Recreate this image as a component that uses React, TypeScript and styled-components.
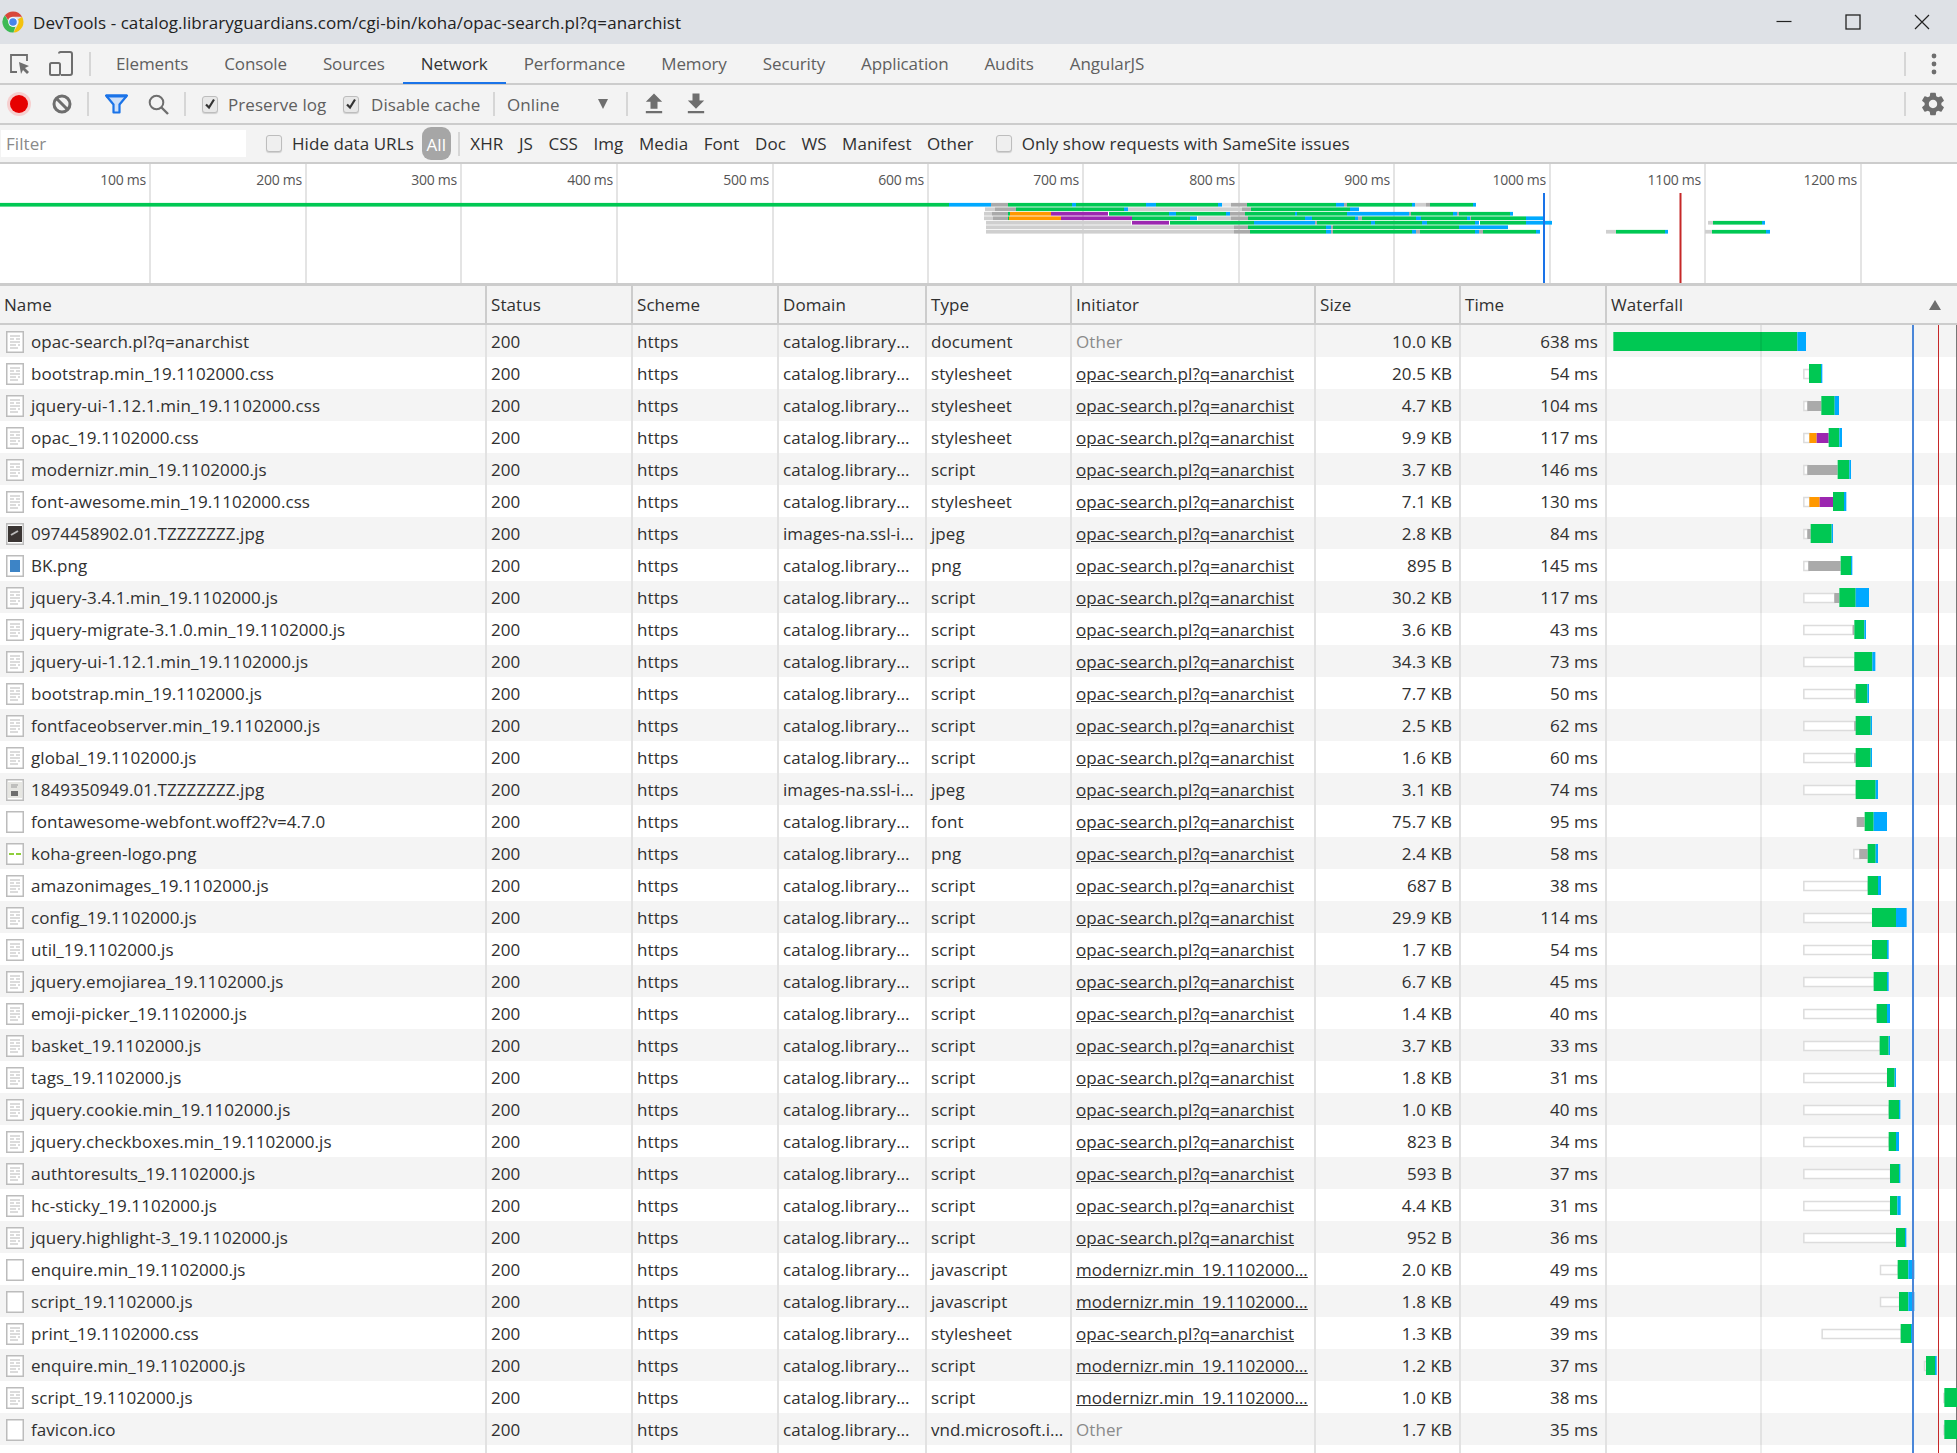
import styled, { createGlobalStyle } from 'styled-components';
import { MdFileDownload, MdFileUpload, MdSettings } from 'react-icons/md';

const GlobalStyle = createGlobalStyle`
  html, body {
    margin: 0;
    padding: 0;
    background: #fff;
  }
  * {
    box-sizing: border-box;
  }
`;

const Page = styled.div`
  width: 1957px;
  height: 1453px;
  overflow: hidden;
  display: flex;
  flex-direction: column;
  font-family: 'Open Sans', 'Noto Sans', sans-serif;
  font-size: 17px;
  letter-spacing: 0.07px;
  color: #333;
`;

const TitleBar = styled.div`
  height: 44px;
  background: #dee1e6;
  display: flex;
  align-items: center;
  padding-left: 2px;
  color: #222;
`;
const TitleText = styled.span`
  margin-left: 9px;
`;
const WindowButtons = styled.div`
  margin-left: auto;
  display: flex;
  gap: 53px;
  padding-right: 27px;
`;

const Bar = styled.div<{ $h: number }>`
  height: ${(p) => p.$h}px;
  background: #f3f3f3;
  border-bottom: 2px solid #ccc;
  display: flex;
  align-items: center;
  flex-shrink: 0;
`;
const Sep = styled.div<{ $l?: number; $r?: number }>`
  width: 2px;
  height: 24px;
  background: #d6d6d6;
  margin-left: ${(p) => p.$l || 0}px;
  margin-right: ${(p) => p.$r || 0}px;
  flex-shrink: 0;
`;
const EndSep = styled(Sep)`
  margin-left: auto;
`;
const IconSlot = styled.div<{ $w: number; $l?: number; $r?: number }>`
  width: ${(p) => p.$w}px;
  margin-left: ${(p) => p.$l || 0}px;
  margin-right: ${(p) => p.$r || 0}px;
  display: flex;
  justify-content: center;
  align-items: center;
  flex-shrink: 0;
  color: #6e6e6e;
`;

const Tab = styled.div<{ $active?: boolean }>`
  height: 39px;
  line-height: 38px;
  padding: 0 18px;
  letter-spacing: -0.12px;
  color: ${(p) => (p.$active ? '#333' : '#5f5f5f')};
  border-bottom: 2px solid ${(p) => (p.$active ? '#1a73e8' : 'transparent')};
  position: relative;
  top: 1px;
`;
const ToolLabel = styled.span<{ $l: number; $w?: number; $dark?: boolean }>`
  margin-left: ${(p) => p.$l}px;
  width: ${(p) => (p.$w ? `${p.$w}px` : 'auto')};
  color: ${(p) => (p.$dark ? '#303030' : '#5f5f5f')};
  white-space: nowrap;
`;
const Check = styled.span<{ $on?: boolean; $l: number }>`
  width: 16px;
  height: 17px;
  margin-left: ${(p) => p.$l}px;
  border-radius: 3px;
  border: 1px solid #bdbdbd;
  background: ${(p) => (p.$on ? '#e8e8e8' : '#efefef')};
  box-shadow: 0 1px 1px rgba(0, 0, 0, 0.15);
  display: flex;
  align-items: center;
  justify-content: center;
  flex-shrink: 0;
`;
const Triangle = styled.span<{ $l: number }>`
  margin-left: ${(p) => p.$l}px;
  width: 0;
  height: 0;
  border-left: 5px solid transparent;
  border-right: 5px solid transparent;
  border-top: 10px solid #6e6e6e;
`;

const FilterBox = styled.div`
  width: 245px;
  height: 27px;
  margin-left: 1px;
  padding-left: 5px;
  background: #fff;
  color: #8a8a8a;
  line-height: 27px;
`;
const FilterChips = styled.div`
  display: flex;
  align-items: center;
  margin-left: 10.5px;
  gap: 15.5px;
`;
const Chip = styled.span`
  color: #303030;
`;
const AllChip = styled.span`
  width: 29px;
  height: 33px;
  margin-left: 8px;
  border-radius: 9px;
  background: #a6a6a6;
  color: #fff;
  line-height: 35px;
  text-align: center;
  flex-shrink: 0;
`;

const Overview = styled.div`
  position: relative;
  height: 122px;
  display: flex;
  flex-shrink: 0;
  background: #fff;
  border-bottom: 3px solid #ccc;
`;
const Tick = styled.div<{ $w: number }>`
  width: ${(p) => p.$w}px;
  flex-shrink: 0;
  border-right: 2px solid #e4e4e4;
  padding: 6px 3px 0 0;
  text-align: right;
  font-size: 14px;
  letter-spacing: -0.25px;
  color: #555;
`;
const OverviewBars = styled.svg`
  position: absolute;
  left: 0;
  top: 0;
`;

const Columns = styled.div<{ $h: number; $stripe?: boolean }>`
  display: grid;
  grid-template-columns: 487px 146px 146px 148px 145px 244px 145px 146px 350px;
  height: ${(p) => p.$h}px;
  line-height: ${(p) => p.$h + 1}px;
  background: ${(p) => (p.$stripe ? '#f4f4f4' : '#fff')};
  flex-shrink: 0;
`;
const HeaderRow = styled(Columns)`
  background: #f3f3f3;
  border-bottom: 2px solid #ccc;
  line-height: 37px;
`;
const HeaderCell = styled.div`
  padding-left: 4px;
  border-right: 2px solid #ccc;
  color: #303030;
  position: relative;
  &:last-child {
    border-right: 0;
  }
`;
const SortMark = styled.span`
  position: absolute;
  right: 16px;
  top: 14px;
  width: 0;
  height: 0;
  border-left: 6px solid transparent;
  border-right: 6px solid transparent;
  border-bottom: 10px solid #6e6e6e;
`;
const Body = styled.div`
  position: relative;
  flex: 1;
  display: flex;
  flex-direction: column;
  border-right: 1px solid #777;
`;
const Cell = styled.div<{ $right?: boolean; $muted?: boolean; $link?: boolean }>`
  padding: ${(p) => (p.$right ? '0 7px 0 0' : '0 0 0 4px')};
  border-right: 2px solid #e2e2e2;
  text-align: ${(p) => (p.$right ? 'right' : 'left')};
  color: ${(p) => (p.$muted ? '#8a8a8a' : '#303030')};
  text-decoration: ${(p) => (p.$link ? 'underline' : 'none')};
  white-space: nowrap;
  overflow: hidden;
`;
const NameCell = styled(Cell)`
  display: flex;
  align-items: center;
  padding-left: 6px;
  gap: 7px;
`;
const FileGlyph = styled.svg`
  flex-shrink: 0;
  margin-top: 2px;
`;
const WaterfallCell = styled.div`
  overflow: hidden;
`;
const Marker = styled.div<{ $x: number; $w: number; $c: string }>`
  position: absolute;
  top: 0;
  bottom: 0;
  left: ${(p) => p.$x}px;
  width: ${(p) => p.$w}px;
  background: ${(p) => p.$c};
  pointer-events: none;
`;

const GREEN = '#00c853';
const BLUE = '#00a9ff';
const GREY = '#aaaaaa';
const LIGHT = '#cfcfcf';
const ORANGE = '#ff9800';
const PURPLE = '#9c27b0';

// overview timeline: row y, then [colour, from, to] in page px
const overviewRows: [number, [string, number, number][]][] = [
  [203, [[GREEN, 0, 949], [BLUE, 949, 991], [GREY, 991, 1008], [GREEN, 1008, 1072], [BLUE, 1072, 1076], [GREEN, 1076, 1146], [BLUE, 1146, 1156], [GREEN, 1156, 1218], [BLUE, 1218, 1222], ['#e2e2e2', 1222, 1231], [GREY, 1231, 1247], [GREEN, 1247, 1336], [BLUE, 1336, 1344], [GREY, 1344, 1347], [GREEN, 1347, 1412], [BLUE, 1412, 1415], [LIGHT, 1415, 1426], [GREY, 1426, 1430], [GREEN, 1430, 1473], [BLUE, 1473, 1476]]],
  [207.5, [[LIGHT, 985, 995], [GREY, 995, 1016], [GREEN, 1016, 1124], [BLUE, 1124, 1128], [LIGHT, 1128, 1242], [GREY, 1242, 1251], [GREEN, 1251, 1350], [BLUE, 1350, 1359]]],
  [212, [[LIGHT, 984, 992], [GREY, 992, 1008], [GREEN, 1008, 1010], [ORANGE, 1010, 1051], [PURPLE, 1051, 1108], [GREEN, 1109, 1169], [BLUE, 1169, 1176], [GREEN, 1176, 1226], [BLUE, 1226, 1230], [GREY, 1230, 1245], [GREEN, 1245, 1295], [BLUE, 1295, 1297], [GREEN, 1297, 1347], [BLUE, 1347, 1409], [GREY, 1409, 1411], [GREEN, 1411, 1453], [BLUE, 1453, 1457], [GREY, 1457, 1459], [GREEN, 1459, 1510], [BLUE, 1510, 1513]]],
  [216.5, [[LIGHT, 984, 993], [GREY, 993, 1008], [GREEN, 1008, 1009], [ORANGE, 1009, 1061], [PURPLE, 1061, 1132], [GREEN, 1132, 1190], [BLUE, 1190, 1197], [LIGHT, 1198, 1231], [GREY, 1231, 1248], [GREEN, 1248, 1305], [BLUE, 1305, 1312], [GREEN, 1312, 1355], [BLUE, 1355, 1358], [GREY, 1358, 1362], [GREEN, 1362, 1416], [BLUE, 1416, 1421], [GREEN, 1421, 1467], [BLUE, 1467, 1470], [GREY, 1470, 1471], [GREEN, 1471, 1526], [BLUE, 1526, 1545]]],
  [221, [[LIGHT, 986, 1131], [PURPLE, 1132, 1169], [GREEN, 1170, 1254], [BLUE, 1254, 1315], [GREY, 1315, 1317], [GREEN, 1317, 1371], [BLUE, 1371, 1375], [GREEN, 1375, 1422], [BLUE, 1422, 1427], [GREEN, 1427, 1475], [BLUE, 1475, 1479], [GREEN, 1480, 1526], [BLUE, 1526, 1552], [LIGHT, 1708, 1713], [GREEN, 1713, 1762], [BLUE, 1762, 1765]]],
  [225.5, [[LIGHT, 986, 1234], [GREY, 1234, 1248], [GREEN, 1248, 1326], [BLUE, 1326, 1331], [GREY, 1331, 1333], [GREEN, 1333, 1459], [BLUE, 1459, 1508]]],
  [230, [[LIGHT, 986, 1234], [GREY, 1234, 1250], [GREEN, 1250, 1326], [BLUE, 1326, 1331], [GREY, 1331, 1333], [GREEN, 1333, 1412], [BLUE, 1412, 1416], [GREY, 1416, 1420], [GREEN, 1420, 1475], [BLUE, 1475, 1479], [GREY, 1479, 1483], [GREEN, 1483, 1536], [BLUE, 1536, 1540], [LIGHT, 1606, 1616], [GREEN, 1616, 1665], [BLUE, 1665, 1668], [LIGHT, 1705, 1712], [GREEN, 1712, 1766], [BLUE, 1766, 1770]]],
];

const tickWidths = [151, 156, 155, 156, 156, 155, 155, 156, 155, 156, 155, 156];
const tickLabels = ['100 ms', '200 ms', '300 ms', '400 ms', '500 ms', '600 ms', '700 ms', '800 ms', '900 ms', '1000 ms', '1100 ms', '1200 ms'];

type IconKind = 'doc' | 'blank' | 'dark' | 'blue' | 'book' | 'logo';
// waterfall: start, then stops of [kind, end], in thirds of a px from x=1600
type Stop = ['w' | 'a' | 'o' | 'p' | 'g' | 'b', number];
interface Req {
  name: string;
  icon: IconKind;
  domain?: string;
  type: string;
  init?: string;
  size: string;
  time: string;
  start: number;
  stops: Stop[];
}

const OPAC = 'opac-search.pl?q=anarchist';
const MOD = 'modernizr.min_19.1102000…';

const requests: Req[] = [
  { name: OPAC, icon: 'doc', type: 'document', size: '10.0 KB', time: '638 ms', start: 40, stops: [['g', 592], ['b', 618]] },
  { name: 'bootstrap.min_19.1102000.css', icon: 'doc', type: 'stylesheet', init: OPAC, size: '20.5 KB', time: '54 ms', start: 610, stops: [['w', 627], ['g', 663], ['b', 667]] },
  { name: 'jquery-ui-1.12.1.min_19.1102000.css', icon: 'doc', type: 'stylesheet', init: OPAC, size: '4.7 KB', time: '104 ms', start: 610, stops: [['w', 622], ['a', 664], ['g', 704], ['b', 717]] },
  { name: 'opac_19.1102000.css', icon: 'doc', type: 'stylesheet', init: OPAC, size: '9.9 KB', time: '117 ms', start: 610, stops: [['w', 628], ['o', 650], ['p', 686], ['g', 718], ['b', 726]] },
  { name: 'modernizr.min_19.1102000.js', icon: 'doc', type: 'script', init: OPAC, size: '3.7 KB', time: '146 ms', start: 610, stops: [['w', 622], ['a', 713], ['g', 748], ['b', 753]] },
  { name: 'font-awesome.min_19.1102000.css', icon: 'doc', type: 'stylesheet', init: OPAC, size: '7.1 KB', time: '130 ms', start: 610, stops: [['w', 628], ['o', 659], ['p', 699], ['g', 732], ['b', 739]] },
  { name: '0974458902.01.TZZZZZZZ.jpg', icon: 'dark', domain: 'images-na.ssl-i…', type: 'jpeg', init: OPAC, size: '2.8 KB', time: '84 ms', start: 610, stops: [['w', 622], ['a', 632], ['g', 695], ['b', 699]] },
  { name: 'BK.png', icon: 'blue', type: 'png', init: OPAC, size: '895 B', time: '145 ms', start: 610, stops: [['w', 625], ['a', 722], ['g', 753], ['b', 757]] },
  { name: 'jquery-3.4.1.min_19.1102000.js', icon: 'doc', type: 'script', init: OPAC, size: '30.2 KB', time: '117 ms', start: 610, stops: [['w', 703], ['a', 718], ['g', 767], ['b', 807]] },
  { name: 'jquery-migrate-3.1.0.min_19.1102000.js', icon: 'doc', type: 'script', init: OPAC, size: '3.6 KB', time: '43 ms', start: 610, stops: [['w', 758], ['a', 763], ['g', 793], ['b', 798]] },
  { name: 'jquery-ui-1.12.1.min_19.1102000.js', icon: 'doc', type: 'script', init: OPAC, size: '34.3 KB', time: '73 ms', start: 610, stops: [['w', 763], ['g', 817], ['b', 826]] },
  { name: 'bootstrap.min_19.1102000.js', icon: 'doc', type: 'script', init: OPAC, size: '7.7 KB', time: '50 ms', start: 610, stops: [['w', 763], ['a', 767], ['g', 802], ['b', 807]] },
  { name: 'fontfaceobserver.min_19.1102000.js', icon: 'doc', type: 'script', init: OPAC, size: '2.5 KB', time: '62 ms', start: 610, stops: [['w', 763], ['a', 767], ['g', 812], ['b', 816]] },
  { name: 'global_19.1102000.js', icon: 'doc', type: 'script', init: OPAC, size: '1.6 KB', time: '60 ms', start: 610, stops: [['w', 763], ['a', 767], ['g', 812], ['b', 816]] },
  { name: '1849350949.01.TZZZZZZZ.jpg', icon: 'book', domain: 'images-na.ssl-i…', type: 'jpeg', init: OPAC, size: '3.1 KB', time: '74 ms', start: 610, stops: [['w', 767], ['g', 827], ['b', 834]] },
  { name: 'fontawesome-webfont.woff2?v=4.7.0', icon: 'blank', type: 'font', init: OPAC, size: '75.7 KB', time: '95 ms', start: 770, stops: [['a', 794], ['g', 821], ['b', 861]] },
  { name: 'koha-green-logo.png', icon: 'logo', type: 'png', init: OPAC, size: '2.4 KB', time: '58 ms', start: 760, stops: [['w', 778], ['a', 803], ['g', 827], ['b', 834]] },
  { name: 'amazonimages_19.1102000.js', icon: 'doc', type: 'script', init: OPAC, size: '687 B', time: '38 ms', start: 610, stops: [['w', 803], ['g', 834], ['b', 843]] },
  { name: 'config_19.1102000.js', icon: 'doc', type: 'script', init: OPAC, size: '29.9 KB', time: '114 ms', start: 610, stops: [['w', 816], ['g', 888], ['b', 920]] },
  { name: 'util_19.1102000.js', icon: 'doc', type: 'script', init: OPAC, size: '1.7 KB', time: '54 ms', start: 610, stops: [['w', 816], ['g', 861], ['b', 866]] },
  { name: 'jquery.emojiarea_19.1102000.js', icon: 'doc', type: 'script', init: OPAC, size: '6.7 KB', time: '45 ms', start: 610, stops: [['w', 821], ['g', 861], ['b', 866]] },
  { name: 'emoji-picker_19.1102000.js', icon: 'doc', type: 'script', init: OPAC, size: '1.4 KB', time: '40 ms', start: 610, stops: [['w', 830], ['g', 861], ['b', 870]] },
  { name: 'basket_19.1102000.js', icon: 'doc', type: 'script', init: OPAC, size: '3.7 KB', time: '33 ms', start: 610, stops: [['w', 839], ['g', 866], ['b', 870]] },
  { name: 'tags_19.1102000.js', icon: 'doc', type: 'script', init: OPAC, size: '1.8 KB', time: '31 ms', start: 610, stops: [['w', 861], ['g', 884], ['b', 888]] },
  { name: 'jquery.cookie.min_19.1102000.js', icon: 'doc', type: 'script', init: OPAC, size: '1.0 KB', time: '40 ms', start: 610, stops: [['w', 866], ['g', 897], ['b', 901]] },
  { name: 'jquery.checkboxes.min_19.1102000.js', icon: 'doc', type: 'script', init: OPAC, size: '823 B', time: '34 ms', start: 610, stops: [['w', 866], ['g', 888], ['b', 897]] },
  { name: 'authtoresults_19.1102000.js', icon: 'doc', type: 'script', init: OPAC, size: '593 B', time: '37 ms', start: 610, stops: [['w', 870], ['g', 897], ['b', 901]] },
  { name: 'hc-sticky_19.1102000.js', icon: 'doc', type: 'script', init: OPAC, size: '4.4 KB', time: '31 ms', start: 610, stops: [['w', 870], ['g', 892], ['b', 902]] },
  { name: 'jquery.highlight-3_19.1102000.js', icon: 'doc', type: 'script', init: OPAC, size: '952 B', time: '36 ms', start: 610, stops: [['w', 888], ['g', 915], ['b', 919]] },
  { name: 'enquire.min_19.1102000.js', icon: 'blank', type: 'javascript', init: MOD, size: '2.0 KB', time: '49 ms', start: 840, stops: [['w', 893], ['g', 925], ['b', 943]] },
  { name: 'script_19.1102000.js', icon: 'blank', type: 'javascript', init: MOD, size: '1.8 KB', time: '49 ms', start: 840, stops: [['w', 897], ['g', 925], ['b', 943]] },
  { name: 'print_19.1102000.css', icon: 'doc', type: 'stylesheet', init: OPAC, size: '1.3 KB', time: '39 ms', start: 665, stops: [['w', 902], ['g', 933], ['b', 937]] },
  { name: 'enquire.min_19.1102000.js', icon: 'doc', type: 'script', init: MOD, size: '1.2 KB', time: '37 ms', start: 972, stops: [['w', 978], ['g', 1005], ['b', 1010]] },
  { name: 'script_19.1102000.js', icon: 'doc', type: 'script', init: MOD, size: '1.0 KB', time: '38 ms', start: 1030, stops: [['w', 1033], ['g', 1075]] },
  { name: 'favicon.ico', icon: 'blank', type: 'vnd.microsoft.i…', size: '1.7 KB', time: '35 ms', start: 1030, stops: [['w', 1033], ['g', 1075]] },
];

const stopColor = { a: GREY, o: ORANGE, p: PURPLE, g: GREEN, b: BLUE };

const Waterfall = ({ start, stops }: { start: number; stops: Stop[] }) => {
  let from = start;
  return (
    <svg width="350" height="32" viewBox="1607 0 350 32">
      {stops.map(([kind, end], i) => {
        const x = 1600 + from / 3;
        const w = (end - from) / 3;
        from = end;
        if (kind === 'w') {
          return <rect key={i} x={x + 0.5} y={12.5} width={w} height={9} fill="#fff" stroke="#dcdcdc" strokeWidth="1.5" />;
        }
        const tall = kind === 'g' || kind === 'b';
        return <rect key={i} x={x} y={tall ? 7 : 12} width={w} height={tall ? 19 : 10} fill={stopColor[kind]} />;
      })}
    </svg>
  );
};

const FileIcon = ({ kind }: { kind: IconKind }) => (
  <FileGlyph width="18" height="22" viewBox="0 0 18 22">
    <rect x="0.75" y="0.75" width="16.5" height="20.5" fill="#fff" stroke="#bcbcbc" strokeWidth="1.5" />
    {kind === 'doc' && (
      <path d="M4 5h10M4 8h4M10 8h4M4 11h10M4 14h6M12 14h2M4 17h8" stroke="#cfcfcf" strokeWidth="1.3" />
    )}
    {kind === 'dark' && (
      <>
        <rect x="2" y="3" width="14" height="16" fill="#3a3533" />
        <path d="M5 12l7-4" stroke="#bbb" strokeWidth="2" />
      </>
    )}
    {kind === 'blue' && <rect x="4" y="5" width="10" height="12" fill="#3d84c6" />}
    {kind === 'book' && (
      <>
        <rect x="2" y="3" width="14" height="16" fill="#e6e6e2" />
        <path d="M5 6h7M5 8h6" stroke="#999" strokeWidth="1" />
        <rect x="5" y="12" width="7" height="5" fill="#6d6d6d" />
      </>
    )}
    {kind === 'logo' && <path d="M3 11h5M10 11h5" stroke="#8fce3c" strokeWidth="2" />}
  </FileGlyph>
);

const ChromeLogo = () => (
  <svg width="22" height="22" viewBox="0 0 22 22">
    <path d="M11 0.5a10.5 10.5 0 0 1 9.1 5.25H11a5.25 5.25 0 0 0-4.9 3.3L2.9 4.3A10.5 10.5 0 0 1 11 0.5z" fill="#d9483b" />
    <path d="M20.1 5.75A10.5 10.5 0 0 1 11.5 21.5l4.1-7.5A5.25 5.25 0 0 0 16 8.2z" fill="#f4c20d" />
    <path d="M11.5 21.5A10.5 10.5 0 0 1 2.9 4.3l4 7a5.25 5.25 0 0 0 6.5 4.4z" fill="#3cba54" />
    <circle cx="11" cy="11" r="4.8" fill="#fff" />
    <circle cx="11" cy="11" r="3.8" fill="#4885ed" />
  </svg>
);

const CheckMark = () => (
  <svg width="12" height="12" viewBox="0 0 12 12">
    <path d="M2 6.5l3 3 5-8" fill="none" stroke="#333" strokeWidth="2.2" />
  </svg>
);

const Box = ({ on, left }: { on?: boolean; left: number }) => (
  <Check $on={on} $l={left}>{on && <CheckMark />}</Check>
);

export default function App() {
  return (
    <Page>
      <GlobalStyle />
      <TitleBar>
        <ChromeLogo />
        <TitleText>DevTools - catalog.libraryguardians.com/cgi-bin/koha/opac-search.pl?q=anarchist</TitleText>
        <WindowButtons>
          <svg width="16" height="16" viewBox="0 0 16 16"><path d="M0.5 7.5h15" stroke="#222" strokeWidth="1.2" /></svg>
          <svg width="16" height="16" viewBox="0 0 16 16"><rect x="1" y="1" width="14" height="14" fill="none" stroke="#222" strokeWidth="1.3" /></svg>
          <svg width="16" height="16" viewBox="0 0 16 16"><path d="M1 1l14 14M15 1L1 15" stroke="#222" strokeWidth="1.2" /></svg>
        </WindowButtons>
      </TitleBar>

      <Bar $h={41}>
        <IconSlot $w={20} $l={10}>
          <svg width="20" height="20" viewBox="0 0 20 20">
            <path d="M7 18H1V1h16v6" fill="none" stroke="#6e6e6e" strokeWidth="1.8" />
            <path d="M9 8l10 4-4 2 4 4-2 2-4-4-2 4z" fill="#6e6e6e" />
          </svg>
        </IconSlot>
        <IconSlot $w={24} $l={19}>
          <svg width="24" height="25" viewBox="0 0 24 25">
            <path d="M10 2.5a1.5 1.5 0 0 1 1.5-1.5H21a2 2 0 0 1 2 2v19a2 2 0 0 1-2 2h-9" fill="none" stroke="#6e6e6e" strokeWidth="2" />
            <rect x="1" y="12" width="10" height="12" rx="1.5" fill="#f3f3f3" stroke="#6e6e6e" strokeWidth="2" />
          </svg>
        </IconSlot>
        <Sep $l={16} $r={7} />
        <Tab>Elements</Tab>
        <Tab>Console</Tab>
        <Tab>Sources</Tab>
        <Tab $active>Network</Tab>
        <Tab>Performance</Tab>
        <Tab>Memory</Tab>
        <Tab>Security</Tab>
        <Tab>Application</Tab>
        <Tab>Audits</Tab>
        <Tab>AngularJS</Tab>
        <EndSep />
        <IconSlot $w={10} $l={23} $r={18}>
          <svg width="6" height="22" viewBox="0 0 6 22">
            <circle cx="3" cy="3" r="2.4" fill="#6e6e6e" />
            <circle cx="3" cy="11" r="2.4" fill="#6e6e6e" />
            <circle cx="3" cy="19" r="2.4" fill="#6e6e6e" />
          </svg>
        </IconSlot>
      </Bar>

      <Bar $h={40}>
        <IconSlot $w={26} $l={6}>
          <svg width="26" height="26" viewBox="0 0 26 26">
            <circle cx="13" cy="13" r="12" fill="#f6cfcf" />
            <circle cx="13" cy="13" r="9" fill="#e60000" />
          </svg>
        </IconSlot>
        <IconSlot $w={20} $l={20}>
          <svg width="20" height="20" viewBox="0 0 20 20">
            <circle cx="10" cy="10" r="8" fill="none" stroke="#6e6e6e" strokeWidth="3" />
            <path d="M4.5 4.5l11 11" stroke="#6e6e6e" strokeWidth="3" />
          </svg>
        </IconSlot>
        <Sep $l={15} $r={16} />
        <IconSlot $w={23}>
          <svg width="23" height="20" viewBox="0 0 23 20">
            <path d="M1 1.5h21l-7.5 9v8h-6v-8z" fill="#cfe0f8" stroke="#1a73e8" strokeWidth="2.2" strokeLinejoin="round" />
            <path d="M1 2h21" stroke="#1a73e8" strokeWidth="3" />
          </svg>
        </IconSlot>
        <IconSlot $w={21} $l={20}>
          <svg width="21" height="21" viewBox="0 0 21 21">
            <circle cx="8.5" cy="8.5" r="6.8" fill="none" stroke="#6e6e6e" strokeWidth="2" />
            <path d="M13.5 13.5l6.5 6.5" stroke="#6e6e6e" strokeWidth="2.4" />
          </svg>
        </IconSlot>
        <Sep $l={15} />
        <Box on left={16} />
        <ToolLabel $l={10} $w={115}>Preserve log</ToolLabel>
        <Box left={0} on />
        <ToolLabel $l={12} $w={122}>Disable cache</ToolLabel>
        <Sep $l={0} />
        <ToolLabel $l={12}>Online</ToolLabel>
        <Triangle $l={38} />
        <Sep $l={18} />
        <IconSlot $w={28} $l={12}><MdFileUpload size={28} /></IconSlot>
        <IconSlot $w={28} $l={14}><MdFileDownload size={28} /></IconSlot>
        <EndSep />
        <IconSlot $w={28} $l={13} $r={10}><MdSettings size={28} /></IconSlot>
      </Bar>

      <Bar $h={39}>
        <FilterBox>Filter</FilterBox>
        <Box left={20} />
        <ToolLabel $dark $l={10}>Hide data URLs</ToolLabel>
        <AllChip>All</AllChip>
        <Sep $l={7} />
        <FilterChips>
          <Chip>XHR</Chip>
          <Chip>JS</Chip>
          <Chip>CSS</Chip>
          <Chip>Img</Chip>
          <Chip>Media</Chip>
          <Chip>Font</Chip>
          <Chip>Doc</Chip>
          <Chip>WS</Chip>
          <Chip>Manifest</Chip>
          <Chip>Other</Chip>
        </FilterChips>
        <Box left={22} />
        <ToolLabel $dark $l={10}>Only show requests with SameSite issues</ToolLabel>
      </Bar>

      <Overview>
        {tickLabels.map((label, i) => (
          <Tick key={label} $w={tickWidths[i]}>{label}</Tick>
        ))}
        <OverviewBars width="1957" height="119" viewBox="0 164 1957 119">
          {overviewRows.map(([y, segs]) =>
            segs.map(([color, a, b], i) => (
              <rect key={`${y}-${i}`} x={a} y={y - 0.1} width={b - a} height={3.7} fill={color} />
            ))
          )}
          <rect x="1543" y="193" width="2" height="90" fill="#1a73e8" />
          <rect x="1679.5" y="193" width="2" height="90" fill="#c62828" />
        </OverviewBars>
      </Overview>

      <HeaderRow $h={39}>
        <HeaderCell>Name</HeaderCell>
        <HeaderCell>Status</HeaderCell>
        <HeaderCell>Scheme</HeaderCell>
        <HeaderCell>Domain</HeaderCell>
        <HeaderCell>Type</HeaderCell>
        <HeaderCell>Initiator</HeaderCell>
        <HeaderCell>Size</HeaderCell>
        <HeaderCell>Time</HeaderCell>
        <HeaderCell>Waterfall<SortMark /></HeaderCell>
      </HeaderRow>

      <Body>
        {requests.map((r, i) => (
          <Columns key={i} $h={32} $stripe={i % 2 === 0}>
            <NameCell><FileIcon kind={r.icon} />{r.name}</NameCell>
            <Cell>200</Cell>
            <Cell>https</Cell>
            <Cell>{r.domain || 'catalog.library…'}</Cell>
            <Cell>{r.type}</Cell>
            {r.init ? <Cell $link>{r.init}</Cell> : <Cell $muted>Other</Cell>}
            <Cell $right>{r.size}</Cell>
            <Cell $right>{r.time}</Cell>
            <WaterfallCell><Waterfall start={r.start} stops={r.stops} /></WaterfallCell>
          </Columns>
        ))}
        <Columns $h={8}>
          {Array.from({ length: 8 }, (_, i) => <Cell key={i} />)}
        </Columns>
        <Marker $x={1760} $w={2} $c="rgba(0,0,0,0.07)" />
        <Marker $x={1912} $w={2} $c="#4a86d8" />
        <Marker $x={1937.5} $w={1.5} $c="#c62828" />
      </Body>
    </Page>
  );
}
